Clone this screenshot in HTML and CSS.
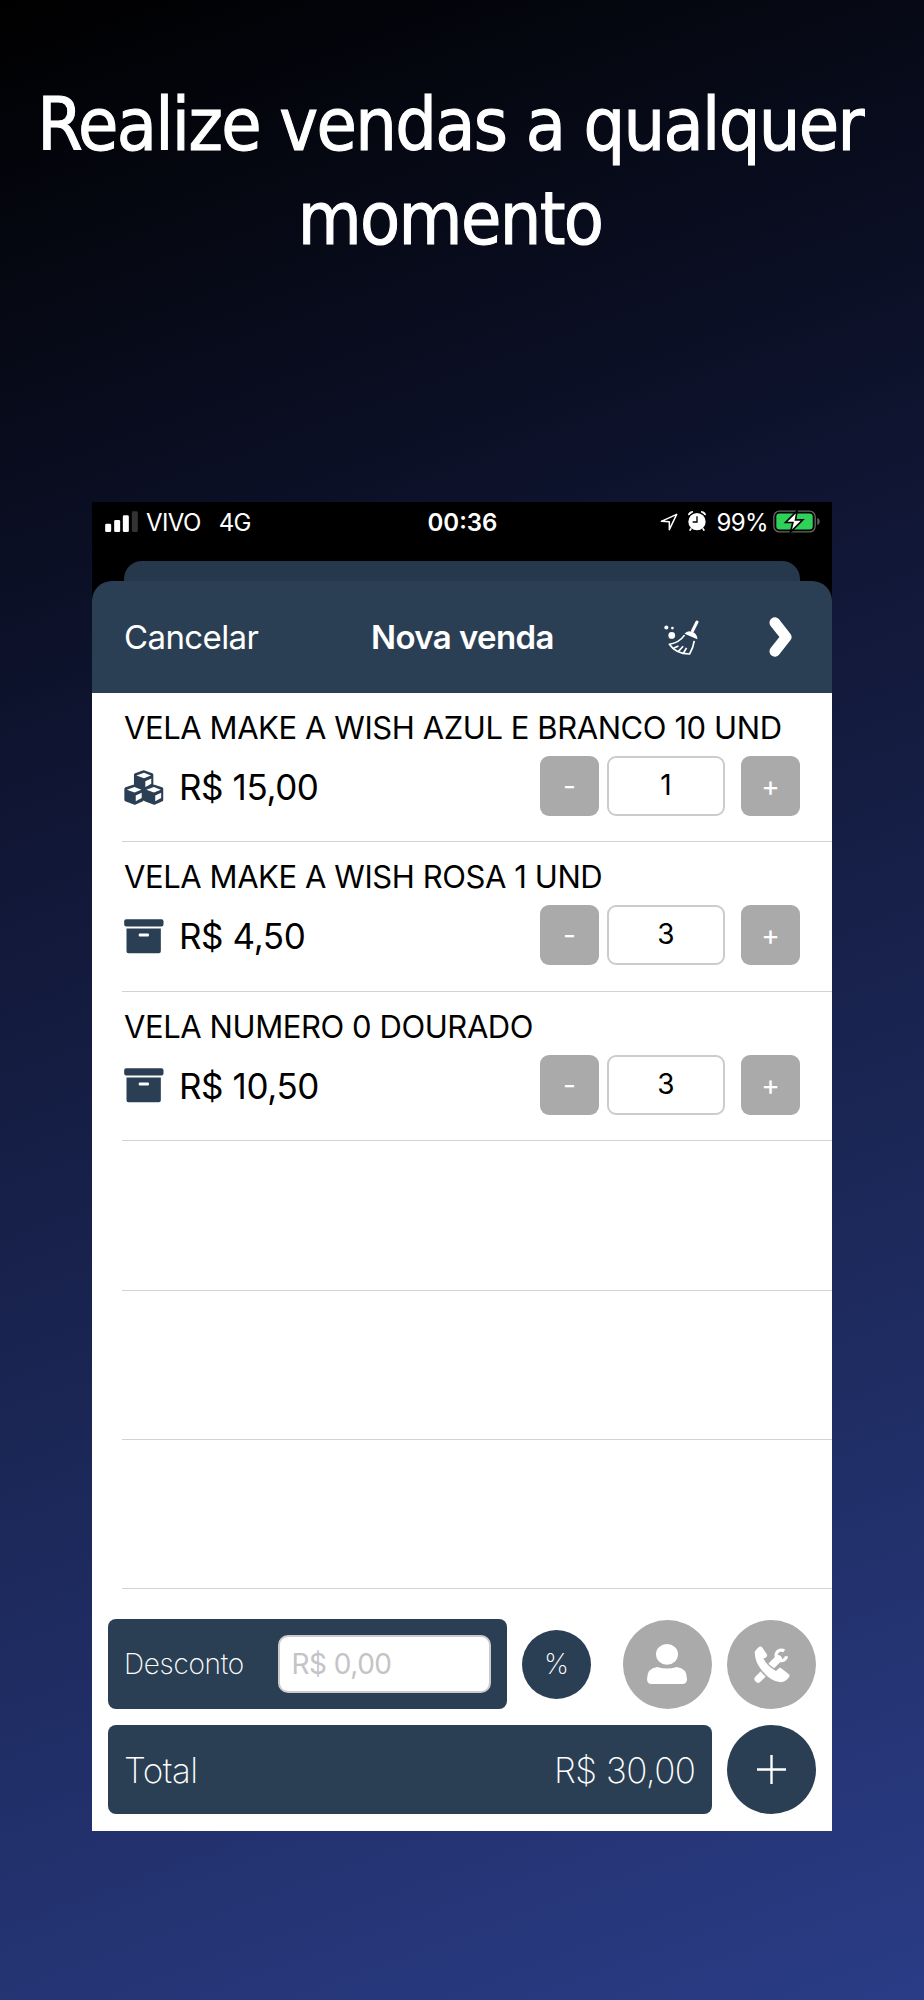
FILE: index.html
```
<!DOCTYPE html>
<html lang="pt-BR">
<head>
  <meta charset="UTF-8">
  <meta name="viewport" content="width=device-width, initial-scale=1.0">
  <title>Nova venda</title>
  <link rel="stylesheet" href="styles.css">
</head>
<body>
  <!-- Shared icons -->
  <svg class="sprite">
    <symbol id="cube" viewBox="0 0 60 64">
      <path fill="#2b3f54" d="M27 1.5Q30 0 33 1.5L56 9.500Q60 11 60 15V46Q60 50 57 51.500L35 61.500Q32 63 29 61.500L3 51.500Q0 50 0 46V15Q0 11 4 9.500Z"/>
      <path fill="#fff" d="M8 17L31 8.500L52 16.500L31 25ZM35 34L53 26V42L35 52Z"/>
    </symbol>
    <symbol id="box" viewBox="0 0 120 106">
      <rect x="0" y="1" width="119" height="22" rx="6"/>
      <path fill-rule="evenodd" d="M7 29H111V98Q111 104 105 104H13Q7 104 7 98ZM47 44Q44 44 44 47V50Q44 53 47 53H72Q75 53 75 50V47Q75 44 72 44Z"/>
    </symbol>
  </svg>

  <h1>Realize vendas a qualquer<br>momento</h1>

  <div class="phone">
    <div class="status">
      <div class="carrier">
        <svg class="signal" viewBox="0 0 98 63">
          <rect x="0" y="38" width="18" height="25" rx="4"/>
          <rect x="27" y="27" width="18" height="36" rx="4"/>
          <rect x="53" y="13" width="18" height="50" rx="4"/>
          <rect x="80" y="1" width="18" height="62" rx="4" fill="#333"/>
        </svg>
        <span class="operator">VIVO</span>
        <span class="network">4G</span>
      </div>
      <div class="clock">00:36</div>
      <div class="battery">
        <svg class="location" viewBox="0 0 54 54"><path d="M4 25L50 4L28 50V26Z" fill="none" stroke="#fff" stroke-width="4.500" stroke-linejoin="round"/></svg>
        <svg class="alarm" viewBox="0 0 54 60">
          <circle cx="27" cy="32" r="26"/>
          <path d="M2 12Q1 2 15 2ZM52 12Q53 2 39 2Z" stroke="#fff" stroke-width="3"/>
          <path d="M10 52L5 59M44 52L49 59" stroke="#fff" stroke-width="5"/>
          <path d="M27 16V33H14" fill="none" stroke="#000" stroke-width="4"/>
        </svg>
        <span class="percent">99%</span>
        <svg class="cell" viewBox="0 0 142 68">
          <rect x="2.500" y="2.500" width="125" height="63" rx="17" fill="none" stroke="#666" stroke-width="4"/>
          <rect x="10" y="10" width="110" height="48" rx="10" fill="#30d158"/>
          <path d="M134 23Q141 26 141 34Q141 42 134 45Z" fill="#666"/>
          <path d="M73 2L38 37H60L53 66L90 29H68Z" stroke="#000" stroke-width="5"/>
        </svg>
      </div>
    </div>
    <div class="back-card"></div>
    <div class="nav">
      <span class="cancel">Cancelar</span>
      <span class="nav-title">Nova venda</span>
      <svg class="broom" viewBox="0 0 104 104">
        <path d="M98 6L85 32" stroke="#fff" stroke-width="9" stroke-linecap="round"/>
        <path d="M61 41Q69 30 83 35Q99 40 99 57Z"/>
        <path d="M61 45Q45 68 16 72Q34 100 76 101Q87 82 90 62M28 84L43 77M42 94L57 78M58 98L67 83" fill="none" stroke="#fff" stroke-width="5" stroke-linejoin="round"/>
        <circle cx="7" cy="22" r="6"/>
        <circle cx="25" cy="24" r="4"/>
        <circle cx="23" cy="46" r="10"/>
      </svg>
      <svg class="chevron" viewBox="0 0 68 120"><path d="M17 17L51 60L17 103" fill="none" stroke="#fff" stroke-width="32" stroke-linecap="round" stroke-linejoin="round"/></svg>
    </div>

    <div class="items">
      <div class="item">
        <div class="name">VELA MAKE A WISH AZUL E BRANCO 10 UND</div>
        <div class="line">
          <svg class="icon" viewBox="0 0 120 106">
            <use href="#cube" x="29" y="0" width="60" height="64"/>
            <use href="#cube" x="0" y="43" width="60" height="64"/>
            <use href="#cube" x="59" y="43" width="60" height="64"/>
          </svg>
          <span class="price">R$ 15,00</span>
          <button>-</button>
          <input type="text" value="1">
          <button>+</button>
        </div>
      </div>
      <div class="item">
        <div class="name">VELA MAKE A WISH ROSA 1 UND</div>
        <div class="line">
          <svg class="icon"><use href="#box"/></svg>
          <span class="price">R$ 4,50</span>
          <button>-</button>
          <input type="text" value="3">
          <button>+</button>
        </div>
      </div>
      <div class="item">
        <div class="name">VELA NUMERO 0 DOURADO</div>
        <div class="line">
          <svg class="icon"><use href="#box"/></svg>
          <span class="price">R$ 10,50</span>
          <button>-</button>
          <input type="text" value="3">
          <button>+</button>
        </div>
      </div>
      <div class="item"></div>
      <div class="item"></div>
      <div class="item"></div>
    </div>

    <div class="footer">
      <div class="footer-row">
        <div class="discount">
          <span>Desconto</span>
          <input type="text" placeholder="R$ 0,00">
        </div>
        <div class="circle small">%</div>
        <div class="circle gray customer">
          <svg class="user" viewBox="0 0 120 120">
            <ellipse cx="60" cy="31" rx="33" ry="31"/>
            <path d="M31 69Q60 78 89 69Q120 72 120 106Q120 120 106 120H14Q0 120 0 106Q0 72 31 69Z"/>
          </svg>
        </div>
        <div class="circle gray">
          <svg class="support" viewBox="0 0 108 112">
            <path d="M12 100L73 39" stroke="#fff" stroke-width="22" stroke-linecap="round"/>
            <path d="M91 15A16 16 0 1 0 98 31" fill="none" stroke="#fff" stroke-width="10"/>
            <path d="M2 17Q8 6 18 1L24 4L40 27L36 35L28 38Q39 61 66 76L75 67Q79 65 83 68L107 87L106 94Q96 108 80 110Q51 108 24 75Q0 46 2 17Z" stroke="#aaa" stroke-width="9" paint-order="stroke"/>
          </svg>
        </div>
      </div>
      <div class="footer-row">
        <div class="total">
          <span>Total</span>
          <span class="total-value">R$ 30,00</span>
        </div>
        <div class="circle">
          <svg class="plus" viewBox="0 0 86 86"><path d="M43 0V86M0 43H86" stroke="#fff" stroke-width="7"/></svg>
        </div>
      </div>
    </div>
  </div>
</body>
</html>
```
FILE: styles.css
```
* {
  box-sizing: border-box;
}

body {
  margin: 0;
  width: 924px;
  height: 2000px;
  overflow: hidden;
  background: linear-gradient(160deg, #000 0%, #0e132e 31%, #1c2859 65%, #2a3c86 100%);
  font-family: Inter, "Liberation Sans", sans-serif;
}

svg {
  display: block;
  flex: none;
  fill: #fff;
}

.sprite {
  display: none;
}

h1 {
  margin: 0;
  width: 900px;
  height: 502px;
  padding-top: 78px;
  color: #fff;
  font-family: "DejaVu Sans Condensed", "DejaVu Sans", sans-serif;
  font-stretch: condensed;
  font-size: 73px;
  font-weight: 400;
  line-height: 93.5px;
  letter-spacing: -1.65px;
  text-align: center;
  -webkit-text-stroke: 1px #fff;
}

.phone {
  width: 740px;
  height: 1328.5px;
  margin-left: 92px;
  background: linear-gradient(#000 130px, #fff 130px);
}

/* status bar */
.status {
  display: grid;
  grid-template-columns: 1fr auto 1fr;
  height: 59px;
  padding: 0 12px 0 13px;
  color: #fff;
  font-size: 24px;
  line-height: 41px;
}

.carrier,
.battery {
  display: flex;
}

.battery {
  justify-content: flex-end;
}

.signal {
  width: 33px;
  height: 21px;
  margin: 9px 8px 0 0;
}

.operator,
.percent {
  letter-spacing: -0.6px;
}

.network {
  margin-left: 18px;
  letter-spacing: -0.6px;
}

.clock {
  font-weight: 600;
}

.location {
  width: 18px;
  height: 18px;
  margin: 11px 10px 0 0;
}

.alarm {
  width: 18px;
  height: 20px;
  margin: 9px 10px 0 0;
}

.cell {
  width: 47px;
  height: 23px;
  margin: 8px 0 0 5px;
}

.back-card {
  height: 20px;
  margin: 0 32px;
  border-radius: 18px 18px 0 0;
  background: #26384c;
}

.nav {
  display: flex;
  align-items: center;
  height: 112px;
  padding: 0 40px 0 32px;
  border-radius: 20px 20px 0 0;
  background: #2b3f54;
  color: #fff;
  font-size: 33px;
  letter-spacing: -0.6px;
}

.cancel {
  width: 247px;
}

.nav-title {
  width: 293px;
  font-weight: 600;
}

.broom {
  width: 35px;
  height: 35px;
}

.chevron {
  width: 23px;
  height: 40px;
  margin-left: auto;
}

/* product list */
.item {
  height: 149.4px;
  margin-left: 30px;
  padding: 14px 32px 0 2px;
  border-bottom: 1px solid #d2d2d2;
}

.name {
  height: 49px;
  color: #000;
  font-size: 31px;
  line-height: 42px;
  letter-spacing: -0.42px;
  white-space: nowrap;
}

.line {
  display: flex;
  align-items: center;
  height: 60px;
}

.icon {
  width: 40px;
  height: 35px;
  margin-top: 2px;
  fill: #2b3f54;
}

.price {
  width: 361px;
  margin-left: 15px;
  padding-top: 2px;
  font-size: 35px;
  letter-spacing: -0.4px;
  white-space: nowrap;
}

.line button {
  width: 59px;
  height: 60px;
  padding: 0;
  border: none;
  border-radius: 9px;
  background: #aaa;
  color: #fff;
  font-family: inherit;
  font-size: 28px;
}

.line input {
  width: 118px;
  height: 60px;
  margin: 0 16px 0 8px;
  padding: 0 0 2px;
  border: 2px solid #ccc;
  border-radius: 9px;
  color: #000;
  font-family: inherit;
  font-size: 28px;
  text-align: center;
}

/* discount and total */
.footer {
  padding: 30px 16px 0;
}

.footer-row {
  display: flex;
  align-items: center;
  justify-content: space-between;
  height: 89.5px;
  margin-bottom: 16px;
}

.discount,
.total {
  display: flex;
  align-items: center;
  justify-content: space-between;
  height: 89.5px;
  padding: 0 16px;
  border-radius: 8px;
  background: #2b3f54;
  color: #fff;
  font-weight: 200;
}

.discount {
  width: 398.5px;
  font-size: 28px;
  letter-spacing: -0.3px;
}

.discount input {
  width: 213px;
  height: 58px;
  padding: 0 12px;
  border: 2px solid #ccc;
  border-radius: 10px;
  background: #fff;
  font-family: inherit;
  font-size: 28px;
  letter-spacing: -0.5px;
}

.discount input::placeholder {
  color: #c4c4c6;
}

.total {
  width: 603.5px;
  font-size: 35px;
  letter-spacing: -0.5px;
}

.circle {
  display: flex;
  align-items: center;
  justify-content: center;
  width: 89px;
  height: 89px;
  border-radius: 50%;
  background: #2b3f54;
  color: #fff;
}

.small {
  width: 69px;
  height: 69px;
  font-size: 28px;
  font-weight: 200;
}

.gray {
  background: #aaa;
}

.customer {
  margin-left: 16px;
}

.user {
  width: 40px;
  height: 40px;
}

.support {
  width: 36px;
  height: 37px;
}

.plus {
  width: 29px;
  height: 29px;
}
```
